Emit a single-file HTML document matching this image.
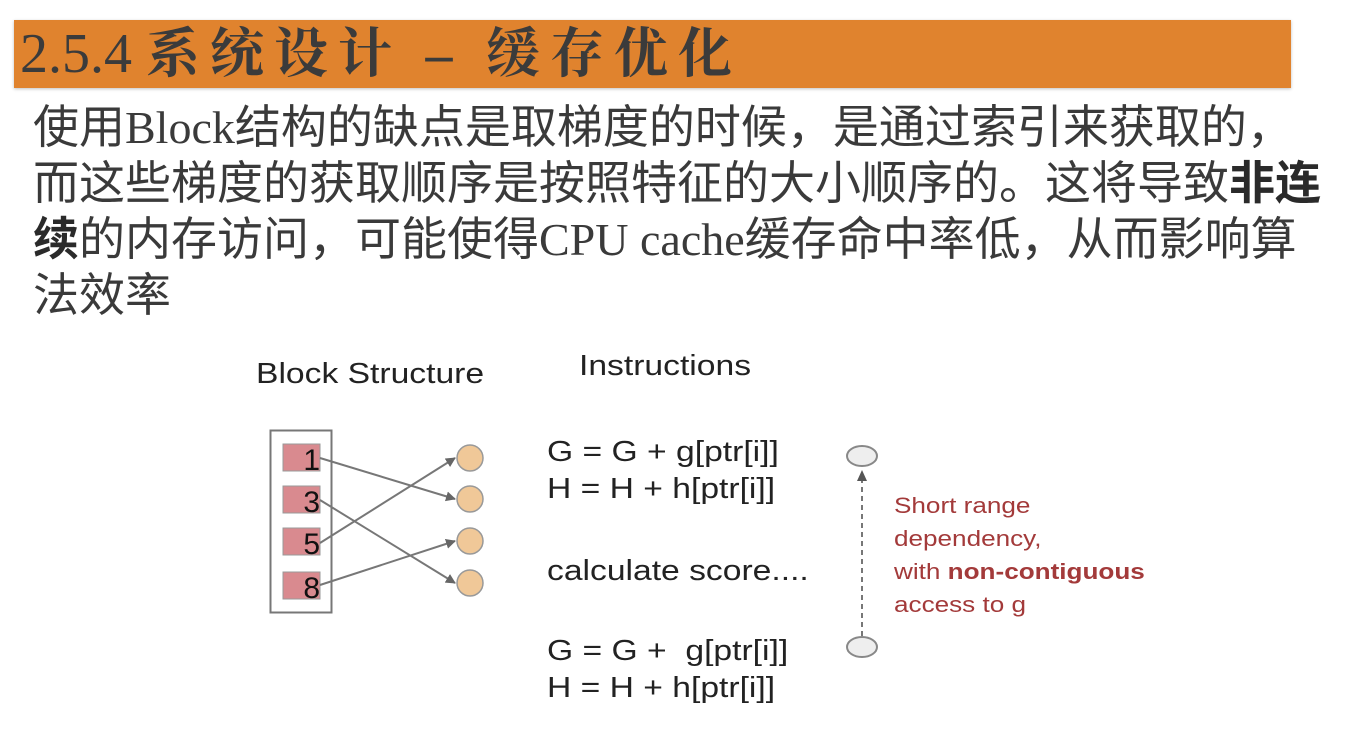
<!DOCTYPE html>
<html><head><meta charset="utf-8"><style>
html,body{margin:0;padding:0;width:1358px;height:742px;background:#fff;overflow:hidden;position:relative}
.banner{position:absolute;left:14px;top:20px;width:1277px;height:68px;background:#e0832e;box-shadow:0 1px 3px rgba(0,0,0,.25)}
.title{position:absolute;left:20px;top:19px;font-family:"Liberation Serif","Noto Serif CJK SC",serif;font-weight:bold;font-size:54px;line-height:70px;color:#3b3b3b;white-space:nowrap;letter-spacing:10px}
.title .n{letter-spacing:0;font-weight:normal;font-size:56px}
.body{position:absolute;left:33px;top:100px;width:1320px;font-family:"Liberation Serif","Noto Sans CJK SC",sans-serif;font-size:46px;line-height:56px;color:#3a3a3a}
.body b{color:#2a2a2a}
.t{position:absolute;font-family:"Liberation Sans",sans-serif;color:#222;white-space:nowrap;transform:scaleX(1.16);transform-origin:left top}
</style></head><body>
<div class="banner"></div>
<div class="title"><span class="n">2.5.4 </span>系统设计 – 缓存优化</div>
<div class="body">使用Block结构的缺点是取梯度的时候，是通过索引来获取的，<br>而这些梯度的获取顺序是按照特征的大小顺序的。这将导致<b>非连<br>续</b>的内存访问，可能使得CPU cache缓存命中率低，从而影响算<br>法效率</div>
<div class="t" style="left:256px;top:358px;font-size:29px">Block Structure</div>
<div class="t" style="left:579px;top:350px;font-size:29px">Instructions</div>
<div class="t" style="left:547px;top:434px;font-size:29px;line-height:37px">G = G + g[ptr[i]]<br>H = H + h[ptr[i]]</div>
<div class="t" style="left:547px;top:555px;font-size:29px">calculate score....</div>
<div class="t" style="left:547px;top:633px;font-size:29px;line-height:37px">G = G + &nbsp;g[ptr[i]]<br>H = H + h[ptr[i]]</div>
<div class="t" style="left:894px;top:489px;font-size:22.5px;line-height:33px;color:#a33a3a">Short range<br>dependency,<br>with <b>non-contiguous</b><br>access to g</div>
<svg style="position:absolute;left:0;top:0" width="1358" height="742">
<defs><marker id="a" markerWidth="10" markerHeight="10" refX="9" refY="5" orient="auto" markerUnits="userSpaceOnUse"><path d="M0,0 L10,5 L0,10z" fill="#666"/></marker></defs>
<rect x="270.5" y="430.5" width="61" height="182" fill="#fff" stroke="#777" stroke-width="2"/>
<g fill="#d98a8f" stroke="#999"><rect x="283" y="444" width="37" height="27"/><rect x="283" y="486" width="37" height="27"/><rect x="283" y="528" width="37" height="27"/><rect x="283" y="572" width="37" height="27"/></g>
<g font-family="Liberation Sans,sans-serif" font-size="30" fill="#111" text-anchor="end"><text x="320" y="470">1</text><text x="320" y="512">3</text><text x="320" y="554">5</text><text x="320" y="598">8</text></g>
<g stroke="#777" stroke-width="2" marker-end="url(#a)"><line x1="320" y1="458" x2="455" y2="499"/><line x1="320" y1="500" x2="455" y2="583"/><line x1="320" y1="543" x2="455" y2="458"/><line x1="320" y1="585" x2="455" y2="541"/></g>
<g fill="#f0c898" stroke="#999" stroke-width="1.5"><circle cx="470" cy="458" r="13"/><circle cx="470" cy="499" r="13"/><circle cx="470" cy="541" r="13"/><circle cx="470" cy="583" r="13"/></g>
<line x1="862" y1="636" x2="862" y2="478" stroke="#777" stroke-width="2" stroke-dasharray="5,4"/>
<path d="M857,481 L862,470 L867,481z" fill="#555"/>
<ellipse cx="862" cy="456" rx="15" ry="10" fill="#eee" stroke="#888" stroke-width="2"/>
<ellipse cx="862" cy="647" rx="15" ry="10" fill="#eee" stroke="#888" stroke-width="2"/>
</svg>
</body></html>
